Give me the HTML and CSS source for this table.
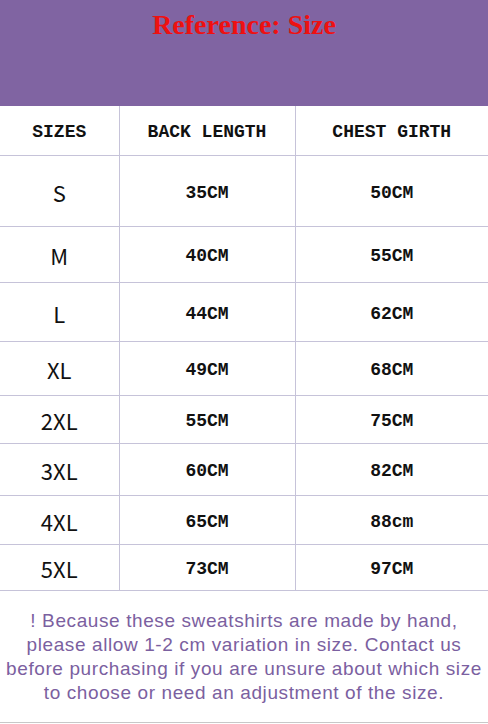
FILE: index.html
```html
<!DOCTYPE html>
<html>
<head>
<meta charset="utf-8">
<link rel="stylesheet" href="styles.css">
</head>
<body>
<div class="banner"><h1 class="title">Reference: Size</h1></div>
<table class="chart">
  <colgroup><col class="c1"><col class="c2"><col class="c3"></colgroup>
  <tr class="r-head"><th>SIZES</th><th>BACK LENGTH</th><th>CHEST GIRTH</th></tr>
  <tr class="r-s"><td class="sz">S</td><td>35CM</td><td>50CM</td></tr>
  <tr class="r-m"><td class="sz">M</td><td>40CM</td><td>55CM</td></tr>
  <tr class="r-l"><td class="sz">L</td><td>44CM</td><td>62CM</td></tr>
  <tr class="r-xl"><td class="sz">XL</td><td>49CM</td><td>68CM</td></tr>
  <tr class="r-2xl"><td class="sz">2XL</td><td>55CM</td><td>75CM</td></tr>
  <tr class="r-3xl"><td class="sz">3XL</td><td>60CM</td><td>82CM</td></tr>
  <tr class="r-4xl"><td class="sz">4XL</td><td>65CM</td><td>88cm</td></tr>
  <tr class="r-5xl"><td class="sz">5XL</td><td>73CM</td><td>97CM</td></tr>
</table>
<div class="note">
  <p>! Because these sweatshirts are made by hand,<br>please allow 1-2 cm variation in size. Contact us<br>before purchasing if you are unsure about which size<br>to choose or need an adjustment of the size.</p>
</div>
</body>
</html>
```
FILE: styles.css
```css
html, body {
  margin: 0;
  padding: 0;
  background: #fff;
}
body {
  width: 488px;
  height: 724px;
  overflow: hidden;
}
.banner {
  background: #8064a2;
  height: 106px;
  box-sizing: border-box;
  padding-top: 9px;
}
.title {
  margin: 0;
  text-align: center;
  color: #ee1111;
  font-family: "Liberation Serif", serif;
  font-weight: bold;
  font-size: 28px;
  line-height: 32px;
}
.chart {
  width: 488px;
  border-collapse: collapse;
  table-layout: fixed;
}
.c1 { width: 119px; }
.c2 { width: 176px; }
.c3 { width: 193px; }
.chart th, .chart td {
  padding: 4px 0 0;
  text-align: center;
  vertical-align: middle;
  border-left: 1px solid #c6c3d9;
  border-bottom: 1px solid #c6c3d9;
  font-family: "Liberation Mono", monospace;
  font-weight: bold;
  font-size: 18px;
  color: #111;
}
.chart th:first-child, .chart td:first-child { border-left: none; }
.chart td.sz {
  padding-top: 2px;
  font-family: "Noto Sans CJK SC", sans-serif;
  font-weight: normal;
  font-size: 22px;
  color: #111;
}
.r-head { height: 49px; }
.r-s { height: 71px; }
.r-m { height: 56px; }
.r-l { height: 59px; }
.r-xl { height: 54px; }
.r-2xl { height: 48px; }
.r-3xl { height: 52px; }
.r-4xl { height: 49px; }
.r-5xl { height: 46px; }
.note {
  height: 132px;
  box-sizing: border-box;
  border-bottom: 1px solid #c8c8c8;
  padding-top: 18px;
}
.note p {
  margin: 0;
  text-align: center;
  color: #7b60a0;
  font-family: "Liberation Sans", sans-serif;
  font-size: 19px;
  line-height: 24px;
  letter-spacing: 0.6px;
}
```
